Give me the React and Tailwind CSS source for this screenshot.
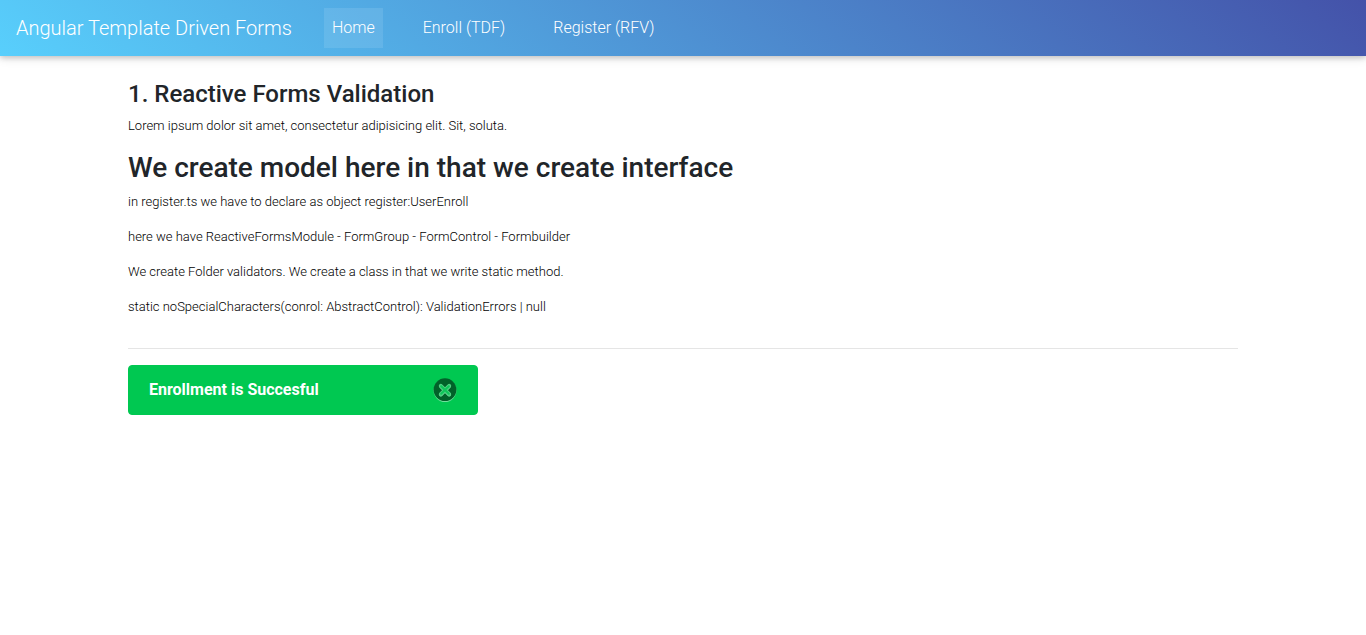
const links = [
  { label: 'Home', active: true },
  { label: 'Enroll (TDF)', active: false },
  { label: 'Register (RFV)', active: false },
];

const notes = [
  'in register.ts we have to declare as object register:UserEnroll',
  'here we have ReactiveFormsModule - FormGroup - FormControl - Formbuilder',
  'We create Folder validators. We create a class in that we write static method.',
  'static noSpecialCharacters(conrol: AbstractControl): ValidationErrors | null',
];

function Navbar() {
  return (
    <nav className="flex min-h-14 items-center bg-[linear-gradient(40deg,#58cffc,#4452a9)] px-4 font-light text-white shadow-[0_2px_5px_0_rgba(0,0,0,0.16),0_2px_10px_0_rgba(0,0,0,0.12)]">
      <a href="#" className="mr-8 text-xl leading-[30px]">Angular Template Driven Forms</a>
      <ul className="flex gap-8">
        {links.map((l) => (
          <li key={l.label}>
            <a href="#" className={l.active ? 'block bg-white/10 p-2 text-base leading-6' : 'block p-2 text-base leading-6'}>
              {l.label}
            </a>
          </li>
        ))}
      </ul>
    </nav>
  );
}

function CloseIcon() {
  return (
    <svg viewBox="0 0 24 24" className="size-6" aria-hidden="true">
      <circle cx="12" cy="12.6" r="11.4" fill="#6fe09c" />
      <circle cx="12" cy="11.7" r="11.4" fill="#016129" />
      <path d="M7.8 8.2 16.2 16.6M16.2 8.2 7.8 16.6" stroke="#6fe09c" strokeWidth="3.8" strokeLinecap="round" />
      <path d="M7.8 7.8 16.2 16.2M16.2 7.8 7.8 16.2" stroke="#4ccf7f" strokeWidth="3.8" strokeLinecap="round" />
      <path d="M8.2 8.2 15.8 15.8M15.8 8.2 8.2 15.8" stroke="#0ec559" strokeWidth="2" strokeLinecap="round" />
    </svg>
  );
}

export default function App() {
  return (
    <div className="bg-white font-[Roboto,sans-serif] text-[#212529]">
      <Navbar />
      <main className="mx-auto max-w-[1142px] px-4 pt-6 text-[13px] leading-[19px] font-light text-black">
        <h4 className="mb-2 text-2xl leading-7 font-medium text-[#212529]">1. Reactive Forms Validation</h4>
        <p className="mb-4">Lorem ipsum dolor sit amet, consectetur adipisicing elit. Sit, soluta.</p>
        <h3 className="mb-2 text-[28px] leading-[33px] font-medium text-[#212529]">We create model here in that we create interface</h3>
        {notes.map((n) => (
          <p key={n} className="mb-4">{n}</p>
        ))}
        <hr className="mt-8 mb-4 border-black/10" />
        <div role="alert" className="flex h-[50px] w-[350px] max-w-full items-center justify-between rounded border border-[#00c851] bg-[#00c851] px-5 text-base font-bold text-white">
          <span>Enrollment is Succesful</span>
          <button type="button" aria-label="Close"><CloseIcon /></button>
        </div>
      </main>
    </div>
  );
}
